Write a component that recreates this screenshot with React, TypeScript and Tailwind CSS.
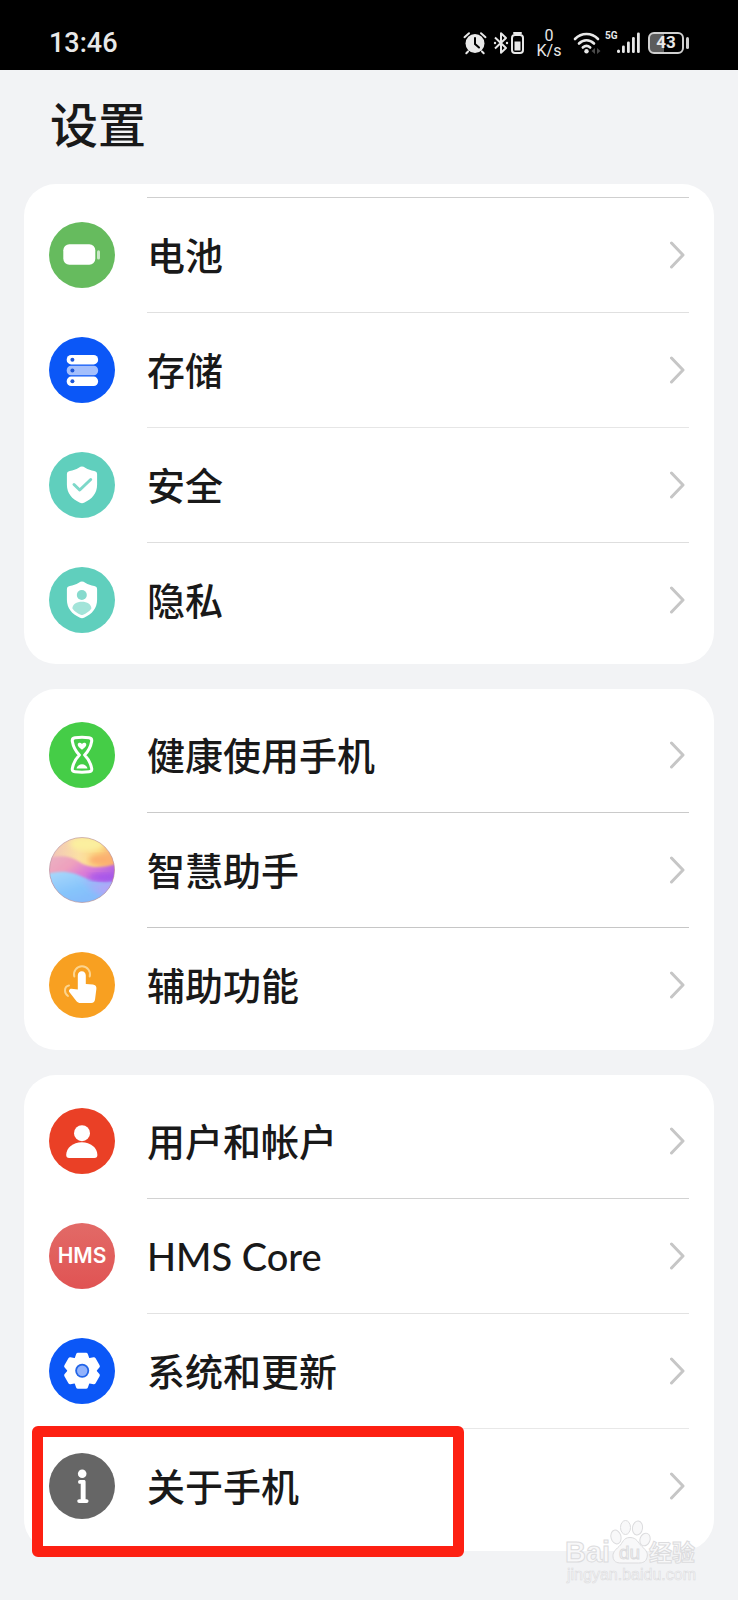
import type { ReactNode } from "react";

type Item = { label: string; icon: ReactNode; rule: string; marked?: boolean };

const SHIELD =
  "M33 14.6c1.2 0 2 .4 3.2 1.1 3 1.8 5.700 2.700 9 3.300 2 .400 2.900 1.300 2.900 3.300v10.500c0 8.700-5.200 14.300-12.600 17.700-1.800.900-3.200.900-5 0-7.400-3.400-12.600-9-12.600-17.700V22.300c0-2 .900-2.900 2.900-3.300 3.300-.600 6-1.500 9-3.300 1.200-.700 2-1.100 3.200-1.100z";

function Disc({ color, children }: { color: string; children: ReactNode }) {
  return (
    <svg viewBox="0 0 66 66" className="size-[66px] shrink-0" aria-hidden="true">
      <circle cx="33" cy="33" r="33" fill={color} />
      {children}
    </svg>
  );
}

const BatteryIcon = (
  <Disc color="#66bb5e">
    <rect x="14.3" y="22.2" width="32" height="20.6" rx="6" fill="#fff" />
    <rect x="48" y="28.200" width="3" height="9.300" rx="1.500" fill="#fff" opacity=".65" />
  </Disc>
);

const StorageIcon = (
  <Disc color="#0b57f7">
    <rect x="17.700" y="18" width="31.400" height="9.400" rx="4.400" fill="#fff" />
    <rect x="17.700" y="28.800" width="31.400" height="9.400" rx="4.400" fill="#a4bffc" />
    <rect x="17.700" y="39.600" width="31.400" height="9.400" rx="4.400" fill="#fff" />
    <g fill="#1d56d8">
      <circle cx="23.400" cy="22.800" r="2" />
      <circle cx="23.400" cy="33.500" r="2" />
      <circle cx="23.400" cy="44.300" r="2" />
    </g>
  </Disc>
);

const SecurityIcon = (
  <Disc color="#60cfbd">
    <path d={SHIELD} fill="#fff" />
    <path d="M25 32.500l5.700 5.500 11-10.500" fill="none" stroke="#7dd8c9" strokeWidth="3" strokeLinecap="round" strokeLinejoin="round" />
  </Disc>
);

const PrivacyIcon = (
  <Disc color="#60cfbd">
    <path d={SHIELD} fill="#fff" />
    <circle cx="32.800" cy="28" r="5" fill="#86dacd" />
    <path d="M23.400 41.500c0-4 4.200-6.700 9.500-6.700s9.500 2.700 9.500 6.700c-2.300 3.200-5.300 5-8.300 6.200-.900.400-1.500.400-2.400 0-3-1.200-6-3-8.300-6.200z" fill="#a3e4d9" />
  </Disc>
);

const HourglassIcon = (
  <Disc color="#45cd47">
    <path
      d="M26 15.800C30.500 15.100 35.500 15.100 40 15.800C42.300 16.200 43 17.300 42.700 19.200C41.700 25 39 29.500 35.600 33C39 36.500 41.700 41 42.700 46.500C43 48.500 42.300 49.500 40 49.800C35.500 50.400 30.500 50.400 26 49.800C23.700 49.500 23 48.500 23.300 46.500C24.300 41 27 36.500 30.400 33C27 29.500 24.300 25 23.300 19.200C23 17.300 23.700 16.200 26 15.800Z"
      fill="none"
      stroke="#fff"
      strokeWidth="3"
      strokeLinejoin="round"
    />
    <path d="M33 27.800c-2.800-2.200-4.300-3.500-4.300-5 0-2.300 3-2.500 4.300-.900 1.300-1.600 4.300-1.400 4.300.900 0 1.500-1.500 2.800-4.300 5z" fill="#fff" />
    <path d="M27.500 46.500c.500-2.700 3-4.300 5.500-4.300s5 1.600 5.500 4.300z" fill="#fff" />
  </Disc>
);

const AssistantIcon = (
  <svg viewBox="0 0 66 66" className="size-[66px] shrink-0" aria-hidden="true">
    <defs>
      <clipPath id="orb">
        <circle cx="33" cy="33" r="32.500" />
      </clipPath>
      <linearGradient id="orbTop" x1="0" y1=".2" x2="1" y2=".3">
        <stop offset="0" stopColor="#f0c3ba" />
        <stop offset=".45" stopColor="#fbe0a4" />
        <stop offset=".75" stopColor="#fbd77f" />
        <stop offset="1" stopColor="#f8a777" />
      </linearGradient>
      <linearGradient id="orbMid" x1="0" y1="0" x2="1" y2=".5">
        <stop offset="0" stopColor="#e9b4c4" />
        <stop offset=".4" stopColor="#eea0bd" />
        <stop offset=".65" stopColor="#d97bd8" />
        <stop offset="1" stopColor="#a75be6" />
      </linearGradient>
      <linearGradient id="orbLow" x1=".1" y1="0" x2=".7" y2="1">
        <stop offset="0" stopColor="#a9d8fb" />
        <stop offset=".5" stopColor="#86c4fb" />
        <stop offset="1" stopColor="#85b4fa" />
      </linearGradient>
      <linearGradient id="orbGlow" x1=".1" y1=".5" x2="1" y2=".5">
        <stop offset="0" stopColor="#c39df5" stopOpacity="0" />
        <stop offset="1" stopColor="#b9a1f7" />
      </linearGradient>
      <filter id="orbSoft">
        <feGaussianBlur stdDeviation="2.500" />
      </filter>
      <filter id="orbEdge">
        <feGaussianBlur stdDeviation="1.200" />
      </filter>
    </defs>
    <g clipPath="url(#orb)">
      <rect width="66" height="66" fill="url(#orbTop)" />
      <ellipse cx="38" cy="7" rx="17" ry="7" fill="#fbef9f" filter="url(#orbSoft)" />
      <ellipse cx="54" cy="23" rx="14" ry="6" fill="#fbb070" filter="url(#orbSoft)" />
      <path d="M-6 22C10 18 20 18 29 24C37 30 48 33 72 26V50H-6z" fill="url(#orbMid)" filter="url(#orbEdge)" />
      <path d="M-6 38C12 32 24 35 34 40C44 45 54 47 72 44V72H-6z" fill="url(#orbLow)" filter="url(#orbEdge)" />
      <path d="M24 36C34 40 46 47 66 45V59C48 62 38 50 24 36z" fill="url(#orbGlow)" filter="url(#orbSoft)" />
      <ellipse cx="52" cy="40" rx="12" ry="4" fill="#a04ff0" opacity=".6" filter="url(#orbSoft)" />
    </g>
    <circle cx="33" cy="33" r="32.500" fill="none" stroke="#b58fa0" strokeOpacity=".6" />
  </svg>
);

const TouchIcon = (
  <Disc color="#f8a021">
    <path d="M25.300 24.500a8 8 0 1 1 15.400 0" fill="none" stroke="#fcd48e" strokeWidth="2" strokeLinecap="round" />
    <path d="M20 33.500c-2.300.400-4 2.600-4 5 0 2.700 1.500 4.500 3 5.500" fill="none" stroke="#fcd48e" strokeWidth="2" strokeLinecap="round" />
    <path
      d="M28.800 23.500c0-2.700 1.600-4.300 4-4.300s4 1.600 4 4.300v8.400l7 .7c2.600.300 3.800 1.700 3.600 4.200l-1.300 10.300c-.300 2.600-1.500 4-4 4H31.500c-1.700 0-2.900-.600-4-1.800l-7-9c-1.200-1.700 0-3.700 2-3.600l6.300.9z"
      fill="#fff"
    />
  </Disc>
);

const UserIcon = (
  <Disc color="#ea4026">
    <circle cx="33" cy="25.200" r="8" fill="#fff" />
    <path d="M17.200 47c0-7 6.800-12.700 15.600-12.700S48.400 40 48.400 47c0 2-1 3-3 3H20.200c-2 0-3-1-3-3z" fill="#fff" />
  </Disc>
);

const HmsIcon = (
  <span
    aria-hidden="true"
    className="flex size-[66px] shrink-0 items-center justify-center rounded-full bg-linear-to-b from-[#e26a67] to-[#e05353] font-['Inter',sans-serif] text-[21px] leading-none font-semibold text-white"
  >
    HMS
  </span>
);

const GearIcon = (
  <Disc color="#0b57f7">
    <g fill="#fff" stroke="#fff" strokeWidth="4" strokeLinejoin="round">
      <circle cx="33" cy="32.800" r="12.500" />
      {[0, 60, 120, 180, 240, 300].map((angle) => (
        <path key={angle} d="M26.500 24l2.500-7.200h8l2.500 7.200z" transform={`rotate(${angle} 33 32.800)`} />
      ))}
    </g>
    <circle cx="33.200" cy="32.800" r="7" fill="#2365e8" />
    <circle cx="33.200" cy="32.800" r="5.200" fill="#93b3fb" />
  </Disc>
);

const InfoIcon = (
  <Disc color="#666">
    <circle cx="33.200" cy="20.800" r="4.300" fill="#fff" />
    <path
      d="M31 27h3.800c1.200 0 1.800.600 1.800 1.800v17.400h1c1.200 0 1.900.700 1.900 1.900s-.7 1.900-1.900 1.900h-7.400c-1.200 0-1.900-.7-1.900-1.900s.7-1.900 1.900-1.900h1.500V30.800H31c-1.200 0-1.900-.7-1.900-1.900s.7-1.900 1.900-1.900z"
      fill="#fff"
    />
  </Disc>
);

const groups: { pad: string; items: Item[] }[] = [
  {
    pad: "pt-[13px] pb-[7px]",
    items: [
      { label: "电池", icon: BatteryIcon, rule: "border-[#cfcfcf]" },
      { label: "存储", icon: StorageIcon, rule: "border-[#e0e0e0]" },
      { label: "安全", icon: SecurityIcon, rule: "border-[#e6e6e6]" },
      { label: "隐私", icon: PrivacyIcon, rule: "border-[#dedede]" },
    ],
  },
  {
    pad: "py-2",
    items: [
      { label: "健康使用手机", icon: HourglassIcon, rule: "border-transparent" },
      { label: "智慧助手", icon: AssistantIcon, rule: "border-[#cacaca]" },
      { label: "辅助功能", icon: TouchIcon, rule: "border-[#c6c6c6]" },
    ],
  },
  {
    pad: "py-2",
    items: [
      { label: "用户和帐户", icon: UserIcon, rule: "border-transparent" },
      { label: "HMS Core", icon: HmsIcon, rule: "border-[#d2d2d2]" },
      { label: "系统和更新", icon: GearIcon, rule: "border-[#e2e2e2]" },
      { label: "关于手机", icon: InfoIcon, rule: "border-[#e8e8e8]", marked: true },
    ],
  },
];

function Row({ item }: { item: Item }) {
  return (
    <li className="relative">
      <button type="button" className="flex h-[115px] w-full items-center gap-8 px-[25px] text-left">
        {item.icon}
        <span className={`flex flex-1 items-center justify-between self-stretch border-t pr-1 ${item.rule}`}>
          <span className="text-[38px] leading-[56px] font-medium">{item.label}</span>
          <svg viewBox="0 0 15 28" className="h-7 w-[15px]" fill="none" stroke="#c6c6c6" strokeWidth="3" strokeLinecap="round" strokeLinejoin="round" aria-hidden="true">
            <path d="M1.500 2l11.500 12L1.500 26" />
          </svg>
        </span>
      </button>
      {item.marked && (
        <span className="pointer-events-none absolute -top-0.5 left-2 h-[131px] w-[432px] rounded-md border-[11px] border-[#fd2012]" />
      )}
    </li>
  );
}

function StatusBar() {
  return (
    <div className="flex h-[70px] items-center justify-between bg-black px-[49px] pt-[15px] text-[#e8e8e8]">
      <time className="font-['Roboto',sans-serif] text-[27px] leading-8 font-medium">13:46</time>
      <div className="flex items-center">
        <svg viewBox="0 0 24 24" className="mr-1.5 size-6" aria-hidden="true">
          <circle cx="12" cy="12.500" r="9.500" fill="currentColor" />
          <path d="M1.500 6.200L6 2.200M22.500 6.200L18 2.200M5 20.500l-1.700 1.700M19 20.500l1.700 1.700" stroke="currentColor" strokeWidth="2" strokeLinecap="round" />
          <path d="M12 7v6l4 3.500" fill="none" stroke="#000" strokeWidth="2" strokeLinecap="round" />
        </svg>
        <svg viewBox="0 0 32 24" className="mr-3 h-6 w-8" fill="none" stroke="currentColor" strokeWidth="2" aria-hidden="true">
          <path d="M2 6.500L13 17l-5 4.700V2.300L13 7 2 17.500" strokeLinejoin="round" />
          <g fill="currentColor" stroke="none">
            <circle cx="2" cy="12" r="1.200" />
            <circle cx="14" cy="12" r="1.200" />
          </g>
          <rect x="19" y="4" width="11" height="18" rx="3" />
          <path d="M21 2h7" strokeLinecap="round" />
          <rect x="21.500" y="10.500" width="6" height="9" fill="currentColor" stroke="none" />
        </svg>
        <span className="mr-3 flex w-6 flex-col items-center font-['Roboto',sans-serif] text-[16px] leading-[15px]">
          <span>0</span>
          <span>K/s</span>
        </span>
        <svg viewBox="0 0 28 24" className="mr-1 h-6 w-7" fill="none" stroke="currentColor" strokeWidth="2.600" strokeLinecap="round" aria-hidden="true">
          <path d="M2 8C8.500 1.300 18.500 1.300 25 8M6 12.500c4.300-4.300 10.700-4.300 15 0M9.800 16.500c2.200-2 5.200-2 7.400 0" />
          <circle cx="13.500" cy="20.300" r="2.200" fill="currentColor" stroke="none" />
          <path d="M22 17l-3.500 3 3.500 3zM24 17l3.500 3-3.500 3z" fill="#4a4a4a" stroke="none" />
        </svg>
        <span className="w-3 self-start font-['Roboto',sans-serif] text-[10px] leading-[16px] font-bold">5G</span>
        <svg viewBox="0 0 23 24" className="mr-2 h-6 w-[23px]" fill="currentColor" aria-hidden="true">
          <rect x="0" y="18.500" width="3" height="3.500" rx="1.500" />
          <rect x="5" y="14.500" width="2.800" height="7.500" rx="1.300" />
          <rect x="10" y="10.500" width="2.800" height="11.500" rx="1.300" />
          <rect x="15" y="6" width="2.800" height="16" rx="1.300" />
          <rect x="20" y="1.500" width="2.800" height="20.500" rx="1.300" />
        </svg>
        <span className="flex h-[22px] w-9 items-center justify-center rounded-md border-2 border-[#d0d0d0] bg-linear-to-r from-[#5c5c5c] from-45% to-black to-45% font-['Roboto',sans-serif] text-[17px] leading-none font-bold">
          43
        </span>
        <span className="ml-0.5 h-3 w-[3px] rounded-sm bg-[#d0d0d0]" />
      </div>
    </div>
  );
}

function Watermark() {
  return (
    <svg
      viewBox="0 0 140 68"
      className="pointer-events-none absolute right-[36px] bottom-[12px] h-[68px] w-[140px]"
      fill="#f8f8f9"
      stroke="#dcdcde"
      strokeWidth="1"
      role="img"
      aria-label="Baidu 经验 jingyan.baidu.com"
    >
      <text x="3" y="42" className="font-['Liberation_Sans',sans-serif] text-[29px] font-bold">Bai</text>
      <ellipse cx="54" cy="17" rx="5" ry="7" transform="rotate(-15 54 17)" />
      <ellipse cx="63.500" cy="7.500" rx="5" ry="7" />
      <ellipse cx="75.500" cy="8" rx="5" ry="7" transform="rotate(8 75.500 8)" />
      <ellipse cx="83" cy="19.500" rx="5" ry="6.500" transform="rotate(20 83 19.500)" />
      <path d="M68 17.500c7 0 8 5.500 12 9 5 4.500 6 7 5 11-1 4.500-4.500 5.500-8.500 5.500H59c-4.500 0-7.500-1.500-8-6-.4-4 1.500-6.500 6-10.500 4-3.500 4-9 11-9z" />
      <text x="57" y="39" className="font-['Liberation_Sans',sans-serif] text-[19px]">du</text>
      <text x="87" y="41" className="font-['Noto_Sans_CJK_SC',sans-serif] text-[23px] font-bold">经验</text>
      <text x="5" y="60" strokeWidth=".6" className="font-['Liberation_Sans',sans-serif] text-[16px]">jingyan.baidu.com</text>
    </svg>
  );
}

export default function App() {
  return (
    <div className="relative min-h-screen bg-[#f2f3f5] pb-[49px] font-['Lato','Noto_Sans_CJK_SC',sans-serif] text-[#191919]">
      <StatusBar />
      <header className="flex h-[114px] items-center px-[50px] pb-1">
        <h1 className="text-[48px] leading-[72px] font-medium">设置</h1>
      </header>
      <main className="flex flex-col gap-[25px] px-6">
        {groups.map((group) => (
          <ul key={group.items[0].label} className={`rounded-[32px] bg-white ${group.pad}`}>
            {group.items.map((item) => (
              <Row key={item.label} item={item} />
            ))}
          </ul>
        ))}
      </main>
      <Watermark />
    </div>
  );
}
